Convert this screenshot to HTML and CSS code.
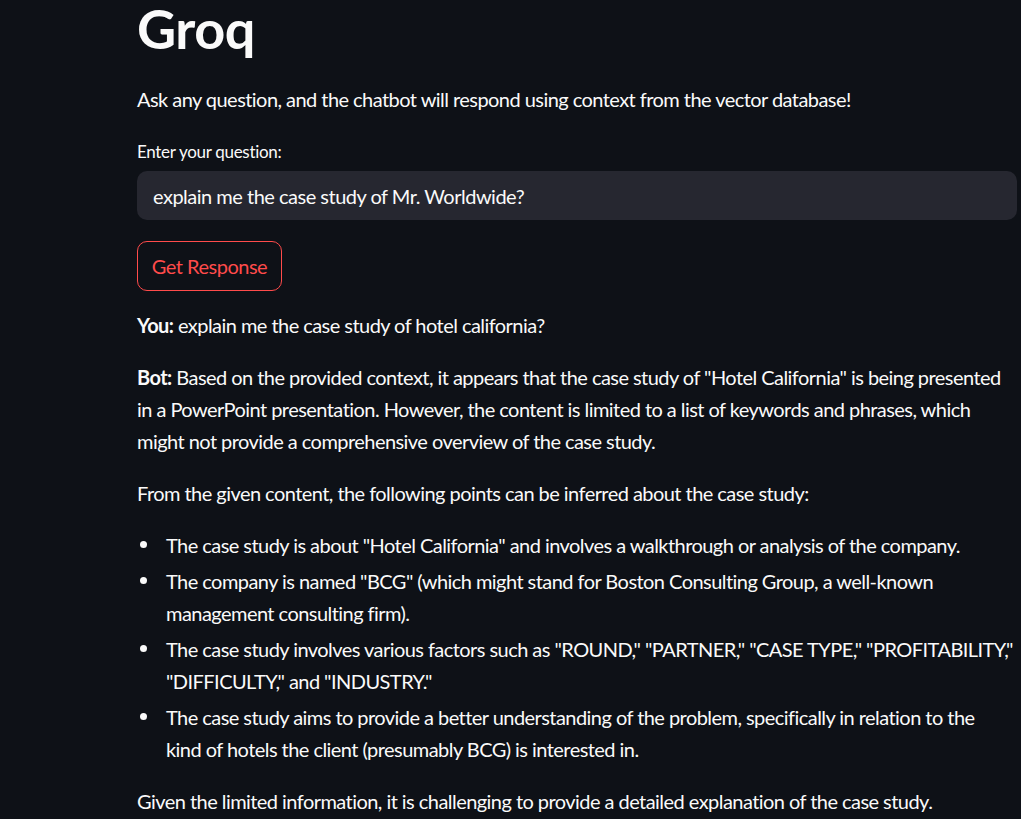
FILE: index.html
```html
<!DOCTYPE html>
<html>
<head>
<meta charset="utf-8">
<link rel="stylesheet" href="styles.css">
</head>
<body>
<main class="main">
  <h1 class="title">Groq</h1>
  <p class="para">Ask any question, and the chatbot will respond using context from the vector database!</p>
  <label class="label" for="q">Enter your question:</label>
  <div class="input-box"><input id="q" class="input" type="text" value="explain me the case study of Mr. Worldwide?"></div>
  <button class="btn">Get Response</button>
  <p class="para"><strong>You:</strong> explain me the case study of hotel california?</p>
  <p class="para"><strong>Bot:</strong> Based on the provided context, it appears that the case study of "Hotel California" is being presented in a PowerPoint presentation. However, the content is limited to a list of keywords and phrases, which might not provide a comprehensive overview of the case study.</p>
  <p class="para">From the given content, the following points can be inferred about the case study:</p>
  <ul class="list">
    <li>The case study is about "Hotel California" and involves a walkthrough or analysis of the company.</li>
    <li>The company is named "BCG" (which might stand for Boston Consulting Group, a well-known management consulting firm).</li>
    <li>The case study involves various factors such as "ROUND," "PARTNER," "CASE TYPE," "PROFITABILITY," "DIFFICULTY," and "INDUSTRY."</li>
    <li>The case study aims to provide a better understanding of the problem, specifically in relation to the kind&nbsp;of hotels the client (presumably BCG) is interested in.</li>
  </ul>
  <p class="para">Given the limited information, it is challenging to provide a detailed explanation of the case study.</p>
</main>
</body>
</html>
```

FILE: styles.css
```css
html, body {
  margin: 0;
  padding: 0;
  background: #0e1117;
  color: #fafafa;
  font-family: Lato, "Liberation Sans", sans-serif;
  overflow: hidden;
  height: 819px;
}
.main {
  margin-left: 137px;
  width: 880px;
  display: flex;
  flex-direction: column;
  align-items: flex-start;
}
.title {
  font-size: 54px;
  font-weight: 700;
  line-height: 58px;
  margin: 0 0 25px 0;
  letter-spacing: -0.5px;
}
.para {
  font-size: 20px;
  line-height: 32px;
  margin: 0 0 20px 0;
  letter-spacing: -0.55px;
}
.label {
  font-size: 17px;
  line-height: 24px;
  margin: 5px 0 7px 0;
  letter-spacing: -0.3px;
}
.input-box {
  width: 880px;
  height: 49px;
  background: #262730;
  border-radius: 10px;
  display: flex;
  align-items: center;
  box-sizing: border-box;
  padding: 0 16px;
}
.input {
  background: transparent;
  border: none;
  outline: none;
  color: #fafafa;
  font-family: inherit;
  font-size: 20px;
  letter-spacing: -0.5px;
  width: 100%;
  padding: 0;
}
.btn {
  margin: 21px 0 18px 0;
  width: 145px;
  height: 50px;
  border: 1px solid #ff4b4b;
  border-radius: 10px;
  background: #0e1117;
  color: #ff4b4b;
  font-family: inherit;
  font-size: 20px;
  letter-spacing: -0.5px;
  padding: 0;
}
.list {
  margin: 0 0 20px 0;
  padding-left: 29px;
  list-style: none;
  font-size: 20px;
  line-height: 32px;
  letter-spacing: -0.55px;
}
.list li {
  position: relative;
}
.list li + li {
  margin-top: 4px;
}
.list li::before {
  content: "";
  position: absolute;
  left: -26px;
  top: 12px;
  width: 7px;
  height: 7px;
  border-radius: 50%;
  background: #fafafa;
}
strong {
  font-weight: 700;
}
```
